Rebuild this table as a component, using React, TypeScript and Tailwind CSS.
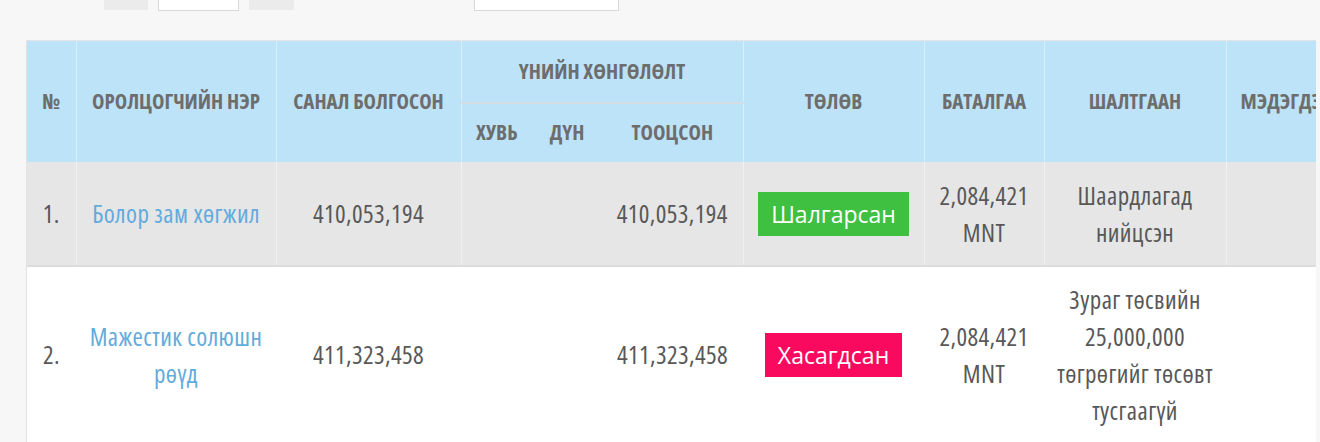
import React from "react";

const hfont = "font-['Open_Sans',sans-serif] font-stretch-[75%]";
const bfont = "font-['Open_Sans',sans-serif] font-stretch-[75%] tracking-[0.4px]";

export default function App() {
  const th = `${hfont} font-bold text-[#6d6d6d] text-[21px] text-center align-middle`;
  const tdBase = `${bfont} text-[25px] leading-[37px] text-center align-middle`;
  const td = `${tdBase} text-[#585858]`;
  const tdLink = `${tdBase} text-[#62abdc]`;
  const vline = "border-r border-r-white/40";
  const badge = "inline-block text-white font-['Open_Sans',sans-serif] font-stretch-normal tracking-normal text-[23px] leading-[44px] px-[13px]";
  return (
    <div className="w-[1320px] h-[442px] bg-[#f7f7f7] overflow-hidden">
      <div className="flex h-[11px] pl-[104px]">
        <div className="w-[44px] h-[10px] bg-[#ebebeb]" />
        <div className="ml-[10px] w-[81px] h-[11px] bg-white border-x border-b border-[#d9d9d9]" />
        <div className="ml-[10px] w-[45px] h-[10px] bg-[#ebebeb]" />
        <div className="ml-[180px] w-[145px] h-[11px] bg-white border-x border-b border-[#d9d9d9]" />
      </div>
      <div className="mt-[29px] ml-[26px] w-[1290px] h-[402px] bg-white border-l border-t border-[#e3e3e3] overflow-hidden">
        <table className="table-fixed border-collapse w-[1349px]">
          <colgroup>
            <col className="w-[49px]" />
            <col className="w-[200px]" />
            <col className="w-[185px]" />
            <col className="w-[71px]" />
            <col className="w-[70px]" />
            <col className="w-[141px]" />
            <col className="w-[181px]" />
            <col className="w-[120px]" />
            <col className="w-[182px]" />
            <col className="w-[150px]" />
          </colgroup>
          <thead className="bg-[#bde3f8]">
            <tr className="h-[62px]">
              <th rowSpan={2} className={`${th} ${vline}`}>№</th>
              <th rowSpan={2} className={`${th} ${vline}`}>ОРОЛЦОГЧИЙН НЭР</th>
              <th rowSpan={2} className={`${th} ${vline}`}>САНАЛ БОЛГОСОН</th>
              <th colSpan={3} className={`${th} ${vline} border-b-2 border-b-[#d6dde2]`}>ҮНИЙН ХӨНГӨЛӨЛТ</th>
              <th rowSpan={2} className={`${th} ${vline}`}>ТӨЛӨВ</th>
              <th rowSpan={2} className={`${th} ${vline}`}>БАТАЛГАА</th>
              <th rowSpan={2} className={`${th} ${vline}`}>ШАЛТГААН</th>
              <th rowSpan={2} className={`${th} text-left pl-[14px] whitespace-nowrap`}>МЭДЭГДЭЛ</th>
            </tr>
            <tr className="h-[59px]">
              <th className={th}>ХУВЬ</th>
              <th className={th}>ДҮН</th>
              <th className={`${th} ${vline}`}>ТООЦСОН</th>
            </tr>
          </thead>
          <tbody>
            <tr className="h-[104px] bg-[#e6e6e6] border-b-2 border-b-[#dcdcdc]">
              <td className={`${td} ${vline}`}>1.</td>
              <td className={`${tdLink} ${vline}`}>Болор зам хөгжил</td>
              <td className={`${td} ${vline}`}>410,053,194</td>
              <td className={td}></td>
              <td className={td}></td>
              <td className={`${td} ${vline}`}>410,053,194</td>
              <td className={`${td} ${vline}`}>
                <span className={`${badge} bg-[#40c040]`}>Шалгарсан</span>
              </td>
              <td className={`${td} ${vline}`}>2,084,421<br />MNT</td>
              <td className={`${td} ${vline}`}>Шаардлагад<br />нийцсэн</td>
              <td className={td}></td>
            </tr>
            <tr className="h-[176px] bg-white">
              <td className={td}>2.</td>
              <td className={`${tdLink} px-[12px]`}>Мажестик солюшн рөүд</td>
              <td className={td}>411,323,458</td>
              <td className={td}></td>
              <td className={td}></td>
              <td className={td}>411,323,458</td>
              <td className={td}>
                <span className={`${badge} bg-[#fa0a5e]`}>Хасагдсан</span>
              </td>
              <td className={td}>2,084,421<br />MNT</td>
              <td className={td}>Зураг төсвийн<br />25,000,000<br />төгрөгийг төсөвт<br />тусгаагүй</td>
              <td className={td}></td>
            </tr>
          </tbody>
        </table>
      </div>
    </div>
  );
}
